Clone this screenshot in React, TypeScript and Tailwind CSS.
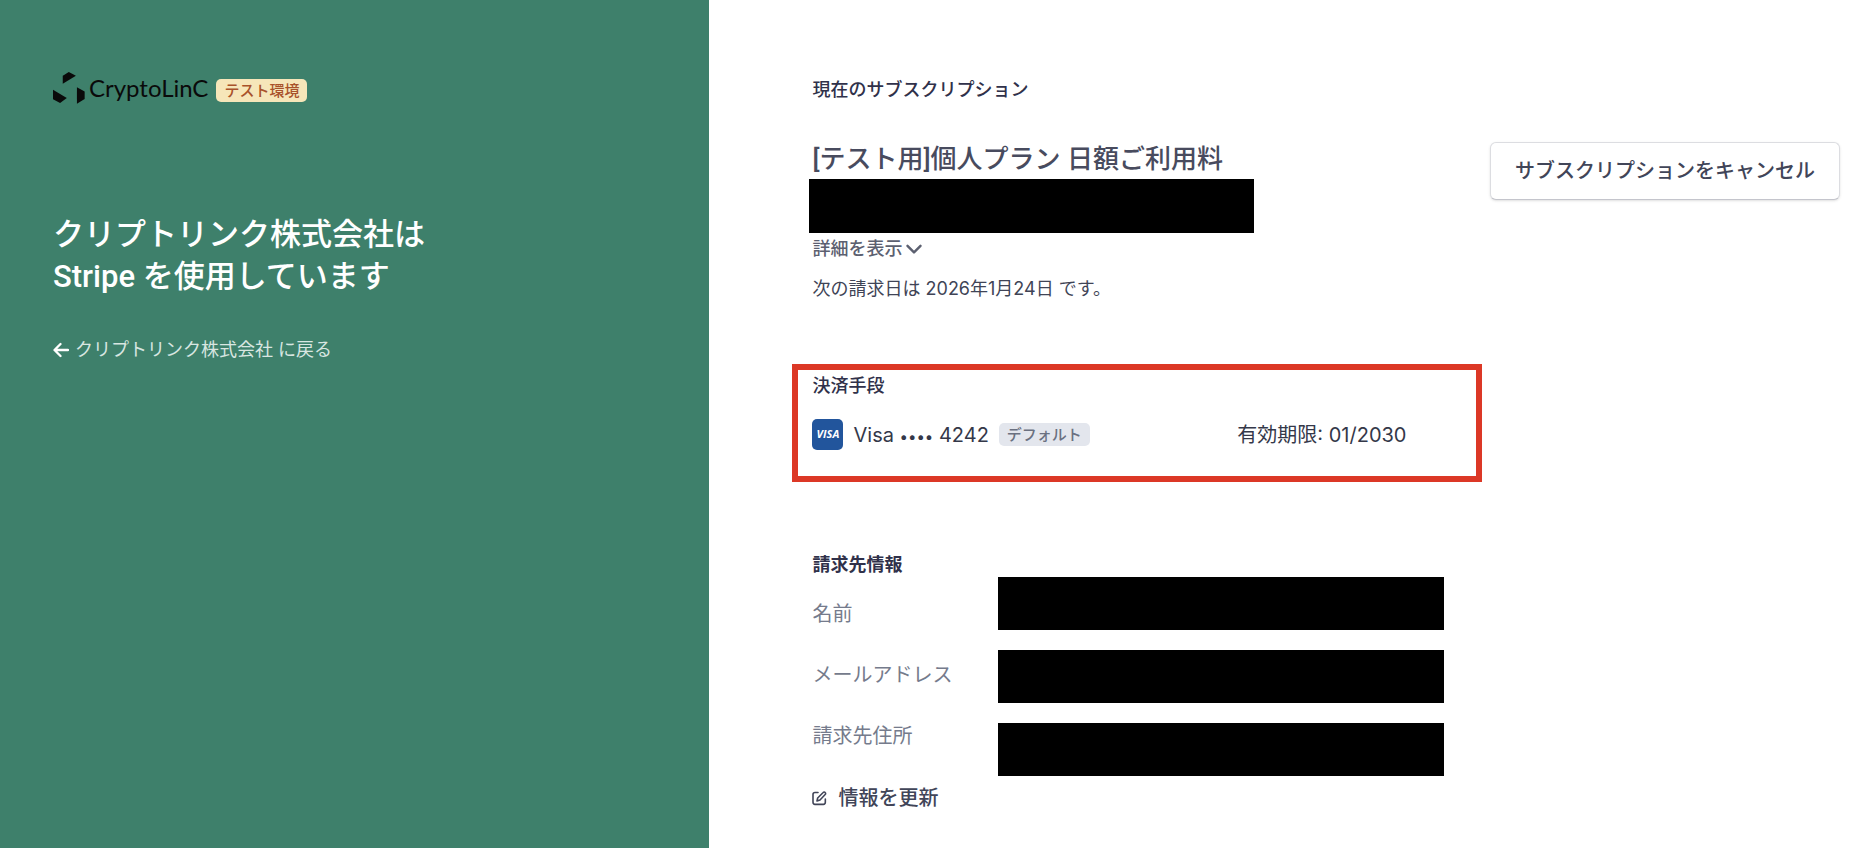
import React from "react";

const billingLabels = ["名前", "メールアドレス", "請求先住所"];

function LogoMark() {
  return (
    <svg viewBox="40 35 95 95" className="size-8 shrink-0" fill="#0a0a0a" aria-hidden="true">
      <path d="M69 46 87 35 108 46 69 70Z" />
      <path d="M40 88 81 112 61 127 40 116Z" />
      <path d="M111 80 134 93V115L111 129Z" />
    </svg>
  );
}

function ArrowLeftIcon() {
  return (
    <svg viewBox="0 0 16 16" className="size-4 shrink-0" fill="none" stroke="currentColor" strokeWidth="2.300" strokeLinecap="round" strokeLinejoin="round" aria-hidden="true">
      <path d="M7.500 2 1.500 8l6 6M2 8h13" />
    </svg>
  );
}

function ChevronDownIcon() {
  return (
    <svg viewBox="0 0 16 16" className="size-4 shrink-0" fill="none" stroke="currentColor" strokeWidth="2.400" strokeLinecap="round" strokeLinejoin="round" aria-hidden="true">
      <path d="M1.500 4.800 8 11.400l6.500-6.600" />
    </svg>
  );
}

function EditIcon() {
  return (
    <svg viewBox="22 35 45 45" className="size-[15px] shrink-0" fill="none" stroke="currentColor" strokeWidth="4.800" strokeLinecap="round" strokeLinejoin="round" aria-hidden="true">
      <path d="M40 39.500H31a6 6 0 0 0-6 6V69a6 6 0 0 0 6 6H56a6 6 0 0 0 6-6V59" />
      <path d="M37 65 39 56 55.500 39.500a4 4 0 0 1 6 0 4 4 0 0 1 0 6L46 62Z" />
    </svg>
  );
}

function Redacted() {
  return <div className="h-[53px] w-full bg-black" />;
}

export default function App() {
  return (
    <div className="flex min-h-screen bg-white font-['Inter','Noto_Sans_CJK_JP',sans-serif] text-[#30314a]" lang="ja">
      <aside className="w-[37.9%] shrink-0 bg-[#3e806b] px-[53px] pt-[72px] text-white">
        <div className="flex h-8 items-center">
          <LogoMark />
          <span className="ml-1 font-['Lato',sans-serif] text-[24px] leading-8 text-[#0a0a0a]">CryptoLinC</span>
          <span className="ml-2 mt-1 rounded-[5px] bg-[#f6e6b9] px-2 text-[15px] leading-[23px] font-medium text-[#a8522a]">
            テスト環境
          </span>
        </div>
        <h1 className="mt-[110px] font-['Roboto','Noto_Sans_CJK_JP',sans-serif] text-[31px] leading-[42px] font-medium">
          クリプトリンク株式会社は
          <br />
          Stripe を使用しています
        </h1>
        <a href="#back" className="mt-[38px] flex items-center gap-1.5 text-[18px] leading-7">
          <ArrowLeftIcon />
          <span className="text-[#d8e6e1]">クリプトリンク株式会社 に戻る</span>
        </a>
      </aside>

      <main className="min-w-0 flex-1 pt-[76px] pr-8 pb-6 pl-[103px]">
        <section>
          <h2 className="text-[18px] leading-7 font-medium">現在のサブスクリプション</h2>
          <div className="mt-[35px] flex items-start justify-between gap-6">
            <div className="w-[445px]">
              <h3 className="font-['Roboto','Noto_Sans_CJK_JP',sans-serif] text-[26px] leading-10 font-medium whitespace-nowrap text-[#484b5e]">
                [テスト用]個人プラン 日額ご利用料
              </h3>
              <div className="-ml-[3px] h-[54px] w-full bg-black" />
              <button type="button" className="mt-0.5 flex items-center gap-1 text-[18px] leading-7 font-medium text-[#5c6070]">
                詳細を表示
                <ChevronDownIcon />
              </button>
              <p className="mt-3 text-[18px] leading-7 text-[#404456]">次の請求日は 2026年1月24日 です。</p>
            </div>
            <button
              type="button"
              className="mt-[3px] h-[58px] rounded-md border border-[#dcdde1] border-b-[#c4c5cc] bg-white px-6 text-[20px] font-medium whitespace-nowrap text-[#414558] shadow-sm"
            >
              サブスクリプションをキャンセル
            </button>
          </div>
        </section>

        <section className="mt-[61px] -ml-5 max-w-[690px] border-6 border-[#dc3826] pt-0.5 pr-[70px] pb-[26px] pl-[14px]">
          <h2 className="text-[18px] leading-7 font-medium">決済手段</h2>
          <div className="mt-[19px] flex h-[31px] items-center text-[20px] text-[#343849]">
            <span className="flex size-[31px] items-center justify-center rounded-[5px] bg-[#22559c] font-['Open_Sans',sans-serif] text-[11px] font-bold text-white italic">
              VISA
            </span>
            <span className="ml-2.5">
              Visa <span className="text-[15px]">••••</span> 4242
            </span>
            <span className="ml-2.5 rounded-[5px] bg-[#e3e6ed] px-2 text-[15px] leading-[23px] font-medium text-[#6a7080]">
              デフォルト
            </span>
            <span className="ml-auto">有効期限: 01/2030</span>
          </div>
        </section>

        <section className="mt-[69px] flex max-w-[632px]">
          <div className="w-[186px] shrink-0">
            <h2 className="text-[18px] leading-7 font-bold">請求先情報</h2>
            <ul className="mt-[21px] flex flex-col gap-[33px] text-[20px] leading-7 text-[#757b8c]">
              {billingLabels.map((label) => (
                <li key={label}>{label}</li>
              ))}
            </ul>
            <button type="button" className="mt-[34px] flex items-center gap-[11px] text-[20px] leading-7 font-medium text-[#414558]">
              <EditIcon />
              情報を更新
            </button>
          </div>
          <div className="flex flex-1 flex-col gap-5 pt-[26px]">
            {billingLabels.map((label) => (
              <Redacted key={label} />
            ))}
          </div>
        </section>
      </main>
    </div>
  );
}
